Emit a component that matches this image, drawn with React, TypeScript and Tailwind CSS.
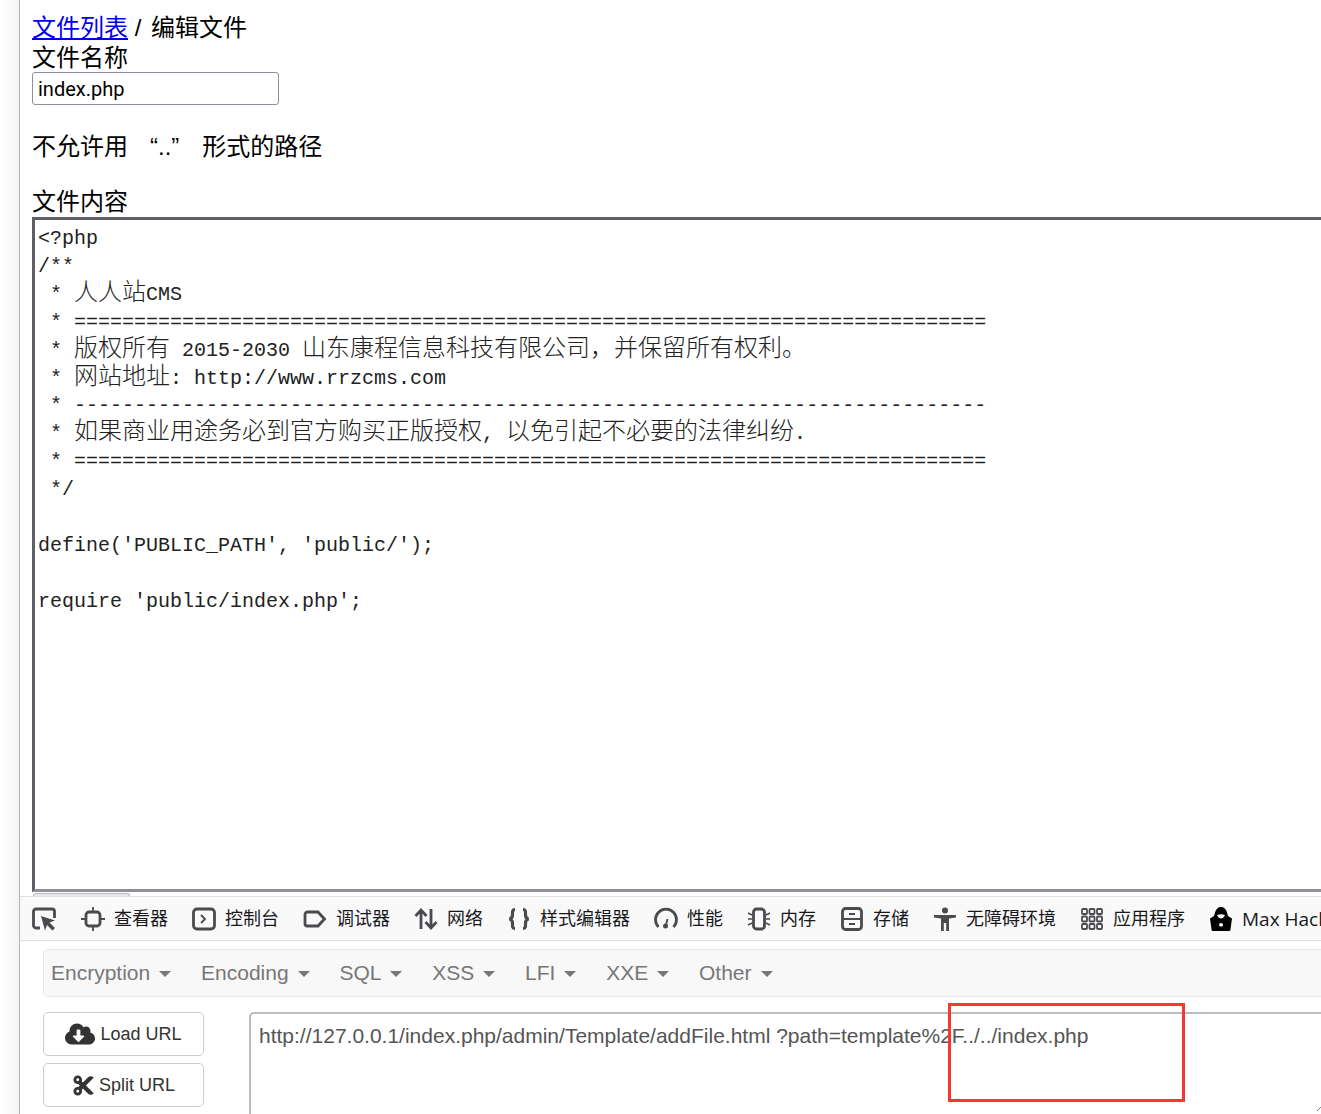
import { Fragment, type ReactNode } from 'react'
import { FaCloudDownloadAlt, FaCut } from 'react-icons/fa'

const cjkStack = '[font-family:"Liberation_Sans","Noto_Sans_CJK_SC",sans-serif]'

const codeLines = [
  '<?php',
  '/**',
  ' * 人人站CMS',
  ' * ============================================================================',
  ' * 版权所有 2015-2030 山东康程信息科技有限公司，并保留所有权利。',
  ' * 网站地址: http://www.rrzcms.com',
  ' * ----------------------------------------------------------------------------',
  ' * 如果商业用途务必到官方购买正版授权, 以免引起不必要的法律纠纷.',
  ' * ============================================================================',
  ' */',
  '',
  "define('PUBLIC_PATH', 'public/');",
  '',
  "require 'public/index.php';",
]

function CodeLine({ text }: { text: string }) {
  const parts = text.split(/([\u4e00-\u9fff，。]+)/)
  return (
    <div className="h-[27.92px] whitespace-pre">
      {parts.map((part, i) =>
        /[\u4e00-\u9fff，。]/.test(part) ? (
          <span key={i} className="font-['Noto_Sans_CJK_SC'] text-[24px] leading-[0] font-light">{part}</span>
        ) : (
          <Fragment key={i}>{part}</Fragment>
        )
      )}
    </div>
  )
}

function Icon({ children }: { children: ReactNode }) {
  return (
    <svg viewBox="0 0 24 24" className="h-[24px] w-[24px] shrink-0 text-[#4a4a4f]" fill="none" stroke="currentColor" strokeWidth="2.800">
      {children}
    </svg>
  )
}

const tabs: { label: string; icon: ReactNode; latin?: boolean }[] = [
  {
    label: '查看器',
    icon: (
      <Icon>
        <rect x="5" y="5" width="14" height="14" rx="3" />
        <path d="M12 0v5M12 19v5M0 12h5M19 12h5" strokeWidth="1.800" />
      </Icon>
    ),
  },
  {
    label: '控制台',
    icon: (
      <Icon>
        <rect x="1.500" y="2" width="21" height="20" rx="3.500" />
        <path d="M9 8l4 4-4 4" strokeWidth="1.800" />
      </Icon>
    ),
  },
  {
    label: '调试器',
    icon: (
      <Icon>
        <path d="M4.500 5h10.500l6.500 7-6.500 7H4.500a2.500 2.500 0 0 1-2.500-2.500v-9A2.500 2.500 0 0 1 4.500 5z" />
      </Icon>
    ),
  },
  {
    label: '网络',
    icon: (
      <Icon>
        <path d="M7 22V3M1.500 9L7 3l5.500 6M17 2v19M11.500 15l5.500 6 5.500-6" />
      </Icon>
    ),
  },
  {
    label: '样式编辑器',
    icon: (
      <Icon>
        <path d="M8 2.500C5 2.500 5.500 5 5.500 8c0 2.500-1 3.500-3 4 2 .5 3 1.500 3 4 0 3-.5 5.500 2.500 5.500M16 2.500c3 0 2.500 2.500 2.500 5.500 0 2.500 1 3.500 3 4-2 .5-3 1.500-3 4 0 3 .5 5.500-2.500 5.500" strokeWidth="3.200" />
      </Icon>
    ),
  },
  {
    label: '性能',
    icon: (
      <Icon>
        <path d="M4.500 20A10.500 10.500 0 1 1 19.500 20" />
        <path d="M12 18l1.500-6" strokeWidth="1.800" />
        <circle cx="11.500" cy="19" r="2.500" fill="currentColor" stroke="none" />
      </Icon>
    ),
  },
  {
    label: '内存',
    icon: (
      <Icon>
        <rect x="6.500" y="2" width="11" height="20" rx="3" />
        <path d="M1 6l4 2M1 12h4M1 18l4-2M23 6l-4 2M23 12h-4M23 18l-4-2" strokeWidth="1.500" />
      </Icon>
    ),
  },
  {
    label: '存储',
    icon: (
      <Icon>
        <rect x="2.500" y="1.500" width="19" height="21" rx="3" />
        <path d="M9 7h6M2.500 12h19M9 17h6" strokeWidth="1.800" />
      </Icon>
    ),
  },
  {
    label: '无障碍环境',
    icon: (
      <svg viewBox="0 0 24 24" className="h-[24px] w-[24px] shrink-0 text-[#4a4a4f]" fill="currentColor">
        <circle cx="12" cy="3.500" r="3" />
        <path d="M1 8h22v2.500l-7 1V24h-2.800v-8h-2.400v8H8V11.500l-7-1z" />
      </svg>
    ),
  },
  {
    label: '应用程序',
    icon: (
      <svg viewBox="0 0 24 24" className="h-[24px] w-[24px] shrink-0 text-[#4a4a4f]" fill="none" stroke="currentColor" strokeWidth="1.800">
        {[2, 9.500, 17].flatMap((y) =>
          [2, 9.500, 17].map((x) => <rect key={`${x}-${y}`} x={x} y={y} width="5" height="5" rx="1" />)
        )}
      </svg>
    ),
  },
  {
    label: 'Max Hackbar',
    latin: true,
    icon: (
      <svg viewBox="0 0 24 24" className="h-[24px] w-[24px] shrink-0 text-black" fill="currentColor">
        <path fillRule="evenodd" d="M12 0c3 0 5 2 6 5.500l1 3.500 4 2.500-1.500 11a1.500 1.500 0 0 1-1.500 1.500H4a1.500 1.500 0 0 1-1.500-1.500L1 11.500 5 9l1-3.500C7 2 9 0 12 0zM8 8c1 2.500 2.500 3.500 4 3.500s3-1 4-3.500c-2.500-1-5.500-1-8 0zM12 16a2 2 0 0 0-2 2c0 1 1 1.500 2 1.500s2-.5 2-1.500a2 2 0 0 0-2-2z" />
      </svg>
    ),
  },
]

const menus = ['Encryption', 'Encoding', 'SQL', 'XSS', 'LFI', 'XXE', 'Other']

export default function App() {
  return (
    <div className={`flex h-[1114px] w-[1321px] overflow-hidden bg-white ${cjkStack}`}>
      <div className="w-[20px] shrink-0 border-r border-r-[#b4b4bc] bg-gradient-to-r from-white to-[#f4f4f4]" />

      <div className="relative flex min-w-0 flex-1 flex-col">
        <div className="h-[893px] shrink-0 pl-[12px] pt-[12px] text-[24px] leading-[31px] text-black">
          <div>
            <a href="#" className="text-[#0000ee] underline">文件列表</a> / <span className="ml-[3px]">编辑文件</span>
          </div>
          <div className="leading-[29px]">文件名称</div>
          <input
            readOnly
            value="index.php"
            className="block h-[33px] w-[247px] rounded-[3px] border border-[#8f8f9d] px-[5px] pt-[1px] font-['Roboto'] text-[20px] text-black"
          />
          <div className="mt-[26px]">
            不允许用<span className="ml-[22px]">“..”</span><span className="ml-[23px]">形式的路径</span>
          </div>
          <div className="mt-[24px]">文件内容</div>
          <div className="h-[675px] w-[1400px] border-[3px] border-[#5f5f69] border-b-[#8f8f9d] pl-[3px] pt-[5px] font-['Liberation_Mono'] text-[20px] leading-[27.92px] text-[#222]">
            {codeLines.map((line, i) => (
              <CodeLine key={i} text={line} />
            ))}
          </div>
        </div>

        <div className="ml-[13px] h-[3px] w-[97px] shrink-0 rounded-t-[6px] border border-b-0 border-[#b8b8c0] bg-[#e8e8ea]" />

        <div className="flex h-[45px] shrink-0 items-center border-y border-[#e0e0e2] bg-[#f9f9fa] pl-[12px] pt-[1px] text-[#18181a]">
          <svg viewBox="0 0 24 24" className="h-[24px] w-[24px] shrink-0 text-[#4a4a4f]" fill="none" stroke="currentColor" strokeWidth="2.800">
            <path d="M8 21H4a2.500 2.500 0 0 1-2.500-2.500v-14A2.500 2.500 0 0 1 4 2h16a2.500 2.500 0 0 1 2.500 2.500V11" />
            <path d="M9 9l14 4.500-5.500 2 5.500 5.500-2.500 2.500-5.500-5.500-2 5.500z" fill="currentColor" stroke="none" />
          </svg>
          <div className="ml-[12px] mr-[13px] h-[30px] w-px bg-[#d7d7db]" />
          <div className="flex items-center gap-[24px] whitespace-nowrap text-[18px]">
            {tabs.map((tab) => (
              <div key={tab.label} className="flex items-center gap-[9px]">
                {tab.icon}
                <span className={tab.latin ? "font-['Open_Sans'] text-[19px]" : 'pt-[1px]'}>{tab.label}</span>
              </div>
            ))}
          </div>
        </div>

        <div className="min-h-0 flex-1 pl-[23px] pt-[8px]">
          <div className="flex h-[48px] w-[1400px] items-center gap-[29.8px] rounded-[5px] border border-[#e7e7e7] bg-[#f8f8f8] pl-[7px] text-[21px] text-[#777]">
            {menus.map((menu) => (
              <div key={menu} className="flex items-center gap-[9px]">
                {menu}
                <span className="mt-[2px] h-0 w-0 border-x-[6px] border-t-[6px] border-x-transparent border-t-[#777]" />
              </div>
            ))}
          </div>

          <div className="mt-[15px] flex gap-[45px]">
            <div className="flex w-[161px] shrink-0 flex-col gap-[7px]">
              <button className="flex h-[44px] items-center justify-center gap-[5px] rounded-[5px] border border-[#ccc] bg-white text-[18px] text-[#333]">
                <FaCloudDownloadAlt className="h-[24px] w-[30px]" />
                Load URL
              </button>
              <button className="flex h-[44px] items-center justify-center gap-[4px] rounded-[5px] border border-[#ccc] bg-white text-[18px] text-[#333]">
                <FaCut className="h-[23px] w-[23px]" />
                Split URL
              </button>
            </div>
            <div className="h-[110px] w-[1100px] shrink-0 rounded-[5px] border-2 border-[#bbb] px-[8px] pt-[8px] text-[21px] leading-[28px] whitespace-nowrap text-[#555]">
              http://127.0.0.1/index.php/admin/Template/addFile.html ?path=template%2F../../index.php
            </div>
          </div>
        </div>

        <div className="absolute left-[928px] top-[1003px] h-[99px] w-[237px] border-[3px] border-[#f83636]" />
        <svg viewBox="0 0 6 6" className="absolute left-[1297px] top-[1105px] h-[6px] w-[6px] text-[#888]" fill="none" stroke="currentColor">
          <path d="M0 6L6 0" />
        </svg>
      </div>
    </div>
  )
}
